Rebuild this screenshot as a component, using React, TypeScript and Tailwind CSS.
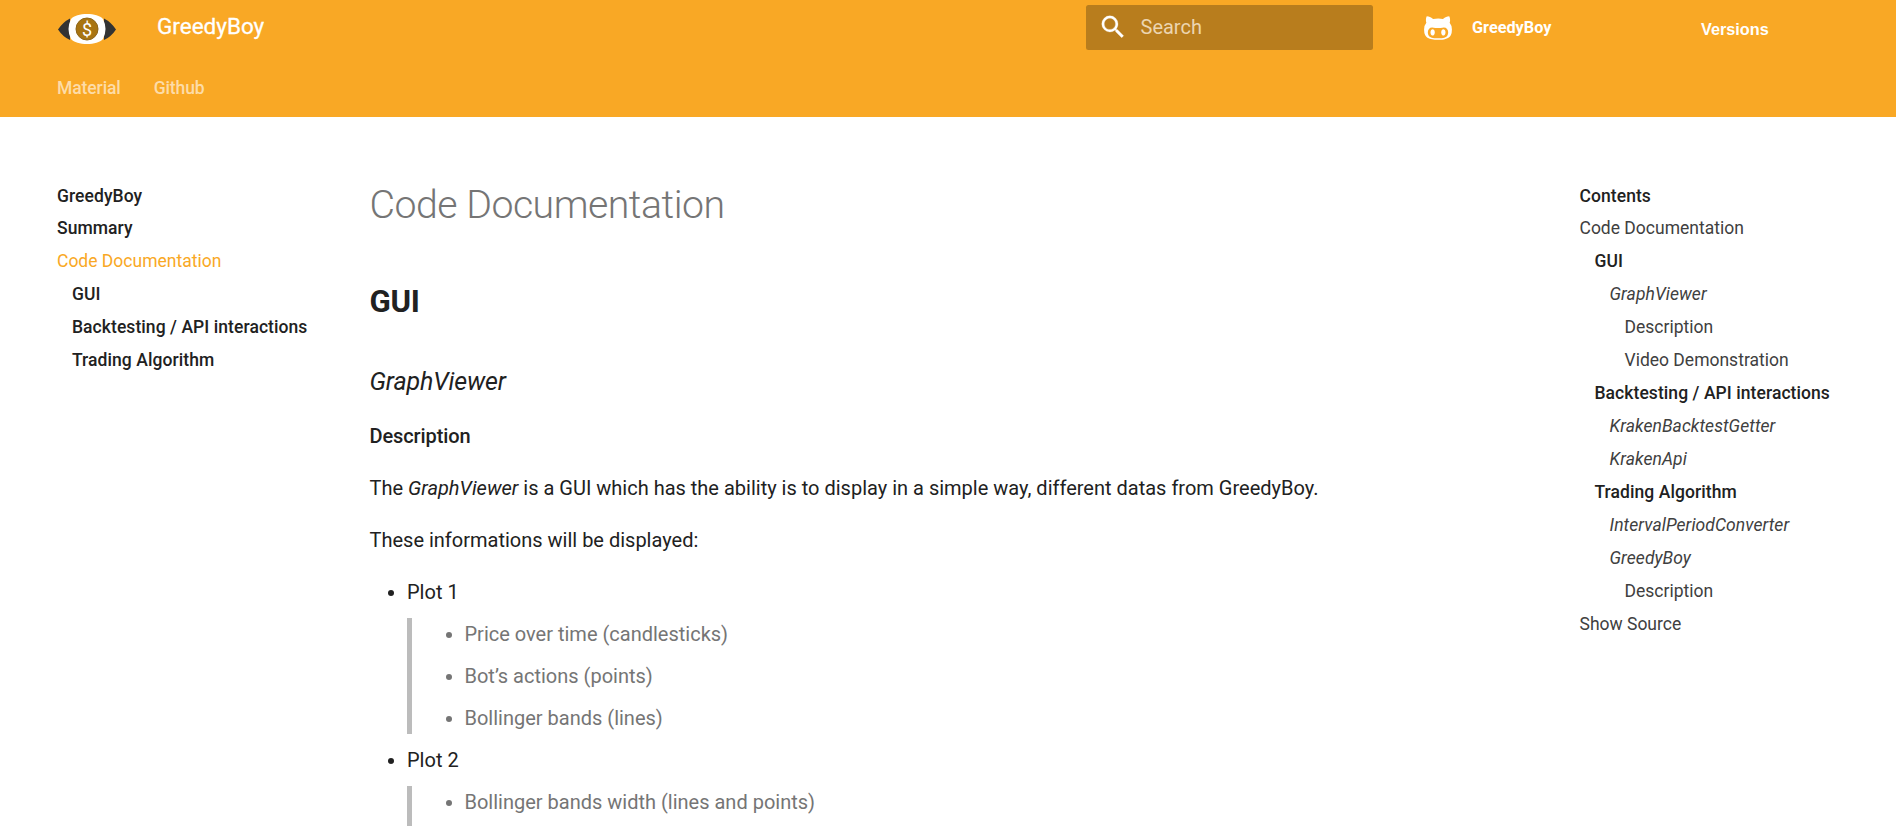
import type { ReactNode } from "react";

type NavItem = { label: string; level: number; style?: "bold" | "italic" | "active" };

const siteNav: NavItem[] = [
  { label: "GreedyBoy", level: 0, style: "bold" },
  { label: "Summary", level: 0, style: "bold" },
  { label: "Code Documentation", level: 0, style: "active" },
  { label: "GUI", level: 1, style: "bold" },
  { label: "Backtesting / API interactions", level: 1, style: "bold" },
  { label: "Trading Algorithm", level: 1, style: "bold" },
];

const pageNav: NavItem[] = [
  { label: "Contents", level: 0, style: "bold" },
  { label: "Code Documentation", level: 0 },
  { label: "GUI", level: 1, style: "bold" },
  { label: "GraphViewer", level: 2, style: "italic" },
  { label: "Description", level: 3 },
  { label: "Video Demonstration", level: 3 },
  { label: "Backtesting / API interactions", level: 1, style: "bold" },
  { label: "KrakenBacktestGetter", level: 2, style: "italic" },
  { label: "KrakenApi", level: 2, style: "italic" },
  { label: "Trading Algorithm", level: 1, style: "bold" },
  { label: "IntervalPeriodConverter", level: 2, style: "italic" },
  { label: "GreedyBoy", level: 2, style: "italic" },
  { label: "Description", level: 3 },
  { label: "Show Source", level: 0 },
];

const indents = ["pl-0", "pl-[15px]", "pl-[30px]", "pl-[45px]"];
const itemStyles = {
  plain: "text-[#404040]",
  bold: "font-medium tracking-[0.07px] text-[#212121]",
  italic: "italic tracking-[0.06px] text-[#404040]",
  active: "text-[#f9a825]",
};

function Nav({ items }: { items: NavItem[] }) {
  return (
    <ul className="text-[17.5px] leading-[33px] whitespace-nowrap">
      {items.map((item, i) => (
        <li key={i} className={`${i === 0 ? "h-8" : "h-[33px]"} ${indents[item.level]}`}>
          <a className={itemStyles[item.style ?? "plain"]}>{item.label}</a>
        </li>
      ))}
    </ul>
  );
}

function Logo() {
  return (
    <svg className="h-[30px] w-[60px]" viewBox="0 0 60 30">
      <path d="M1 15.500Q6 8 13 4.500V26Q6 23 1 15.500ZM59 15.500Q54 8 47 4.500V26Q54 23 59 15.500Z" fill="#333" />
      <path d="M30 0C37 0 43 1.500 46 5Q51 15 46 25C43 28.500 37 30 30 30S17 28.500 14 25Q9 15 14 5C17 1.500 23 0 30 0Z" fill="#fff" />
      <circle cx="30" cy="15" r="11" fill="#a87411" stroke="#8d6519" />
      <text x="30" y="21.500" textAnchor="middle" fontSize="18" fill="#fff" className="font-['Roboto']">$</text>
    </svg>
  );
}

function Bullet({ children, quoted }: { children: ReactNode; quoted?: boolean }) {
  return (
    <li className="flex h-8 items-center">
      <span className={`mt-[2px] h-[6px] w-[6px] rounded-full ${quoted ? "mr-[12.5px] ml-[0.5px] bg-[#757575]" : "mr-[13px] bg-[#212121]"}`} />
      {children}
    </li>
  );
}

function Plot({ name, points }: { name: string; points: string[] }) {
  return (
    <div className="flex flex-col gap-[10px]">
      <ul className="pl-[18.5px]"><Bullet>{name}</Bullet></ul>
      <ul className="ml-[37.5px] flex flex-col gap-[10px] border-l-[5px] border-[#bcbcbc] pl-[33.5px] text-[#757575]">
        {points.map((p) => <Bullet key={p} quoted>{p}</Bullet>)}
      </ul>
    </div>
  );
}

export default function App() {
  return (
    <div className="h-[826px] overflow-hidden bg-white font-['Roboto',sans-serif] text-[#212121]">
      <header className="h-[117px] bg-[#f9a825] text-white">
        <div className="flex h-[54px] items-start">
          <div className="w-[100px] shrink-0 pt-[14px] ml-[57px]"><Logo /></div>
          <div className="w-[929px] shrink-0 pt-[5px] text-[22.5px] leading-[43px] [-webkit-text-stroke:0.3px_white]">GreedyBoy</div>
          <div className="mt-[5px] flex h-[45px] w-[287px] shrink-0 items-center rounded-[2.5px] bg-[#b87d1d] pl-[12px]">
            <svg className="mt-[-1px] h-[30px] w-[30px]" viewBox="0 0 24 24" fill="currentColor" stroke="currentColor" strokeWidth="0.2">
              <path d="M9.500 3A6.500 6.500 0 0 1 16 9.500c0 1.610-.590 3.090-1.560 4.230l.270.270h.790l5 5-1.500 1.500-5-5v-.790l-.270-.270A6.516 6.516 0 0 1 9.500 16 6.500 6.500 0 0 1 3 9.500 6.500 6.500 0 0 1 9.500 3m0 2C7 5 5 7 5 9.500S7 14 9.500 14 14 12 14 9.500 12 5 9.500 5z" />
            </svg>
            <span className="mt-[-2px] ml-[12.5px] text-[20px] text-[#ecd5b0]">Search</span>
          </div>
          <svg className="mt-[12px] ml-[51px] h-[30px] w-[28px] shrink-0" viewBox="0 0 416 448" fill="currentColor">
            <path d="M160 304q0 10-3.125 20.500t-10.750 19T128 352t-18.125-8.500-10.750-19T96 304t3.125-20.500 10.750-19T128 256t18.125 8.500 10.750 19T160 304zm160 0q0 10-3.125 20.500t-10.750 19T288 352t-18.125-8.500-10.750-19T256 304t3.125-20.500 10.750-19T288 256t18.125 8.500 10.750 19T320 304zm40 0q0-30-17.250-51T296 232q-10.250 0-48.750 5.250Q229.500 240 208 240t-39.250-2.750Q130.750 232 120 232q-29.500 0-46.750 21T56 304q0 22 8 38.375t20.250 25.750 30.500 15 35 7.375 37.250 1.750h42q20.500 0 37.250-1.750t35-7.375 30.500-15 20.250-25.750T360 304zm56-44q0 51.750-15.250 82.750-9.500 19.250-26.375 33.250t-35.250 21.500-42.500 11.875-42.875 5.500T212 416q-19.500 0-35.500-.750t-36.875-3.125-38.125-7.500-34.250-12.875T37 371.500t-21.500-28.750Q0 312 0 260q0-59.250 34-99-6.750-20.500-6.750-42.500 0-29 12.750-54.500 27 0 47.500 9.875t47.250 30.875Q171.500 96 212 96q37 0 70 8 26.250-20.500 46.750-30.250T376 64q12.750 25.500 12.750 54.500 0 21.750-6.750 42 34 40 34 99.500z" />
          </svg>
          <span className="ml-[20px] w-[229px] shrink-0 pt-[12px] text-[16.250px] leading-[32px] font-bold">GreedyBoy</span>
          <span className="pt-[13px] font-['Liberation_Sans',sans-serif] text-[16.250px] leading-[32px] font-bold">Versions</span>
        </div>
        <nav className="flex gap-[33px] pt-[18px] pl-[57px] text-[17.5px] leading-[33px] font-medium tracking-[-0.1px] text-[#fddca8]">
          <a>Material</a>
          <a>Github</a>
        </nav>
      </header>
      <div className="flex">
        <aside className="ml-[57px] w-[312.5px] shrink-0 pt-[63px]"><Nav items={siteNav} /></aside>
        <main className="w-[1210px] shrink-0 text-[20px] leading-[32px]">
          <h1 className="mt-[62px] text-[39.25px] leading-[52px] font-light tracking-[-0.5px] text-[#757575]">Code Documentation</h1>
          <h2 className="mt-[51px] text-[31.25px] leading-[40px] font-bold tracking-[-0.31px]">GUI</h2>
          <h3 className="mt-[44px] text-[25px] leading-[32px] tracking-[-0.15px] italic">GraphViewer</h3>
          <h4 className="mt-[22px] font-medium tracking-[-0.1px]">Description</h4>
          <p className="mt-[20px]">
            The <em>GraphViewer</em> is a GUI which has the ability is to display in a simple way, different datas from GreedyBoy.
          </p>
          <p className="mt-[20px]">These informations will be displayed:</p>
          <div className="mt-[20px] flex flex-col gap-[10px]">
            <Plot name="Plot 1" points={["Price over time (candlesticks)", "Bot’s actions (points)", "Bollinger bands (lines)"]} />
            <Plot name="Plot 2" points={["Bollinger bands width (lines and points)", ""]} />
          </div>
        </main>
        <aside className="pt-[63px]"><Nav items={pageNav} /></aside>
      </div>
    </div>
  );
}
